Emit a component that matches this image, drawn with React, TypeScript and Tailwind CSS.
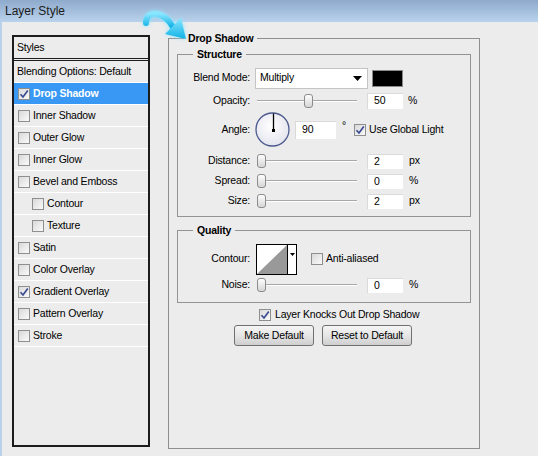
import React from 'react';

const styleRows = [
  { label: 'Drop Shadow', checked: true, active: true },
  { label: 'Inner Shadow' },
  { label: 'Outer Glow' },
  { label: 'Inner Glow' },
  { label: 'Bevel and Emboss' },
  { label: 'Contour', indent: true },
  { label: 'Texture', indent: true },
  { label: 'Satin' },
  { label: 'Color Overlay' },
  { label: 'Gradient Overlay', checked: true },
  { label: 'Pattern Overlay' },
  { label: 'Stroke' },
];

const Check = ({ checked = false }: { checked?: boolean }) => (
  <span className="w-[12px] h-[12px] shrink-0 border border-[#8e8f8f] bg-linear-to-br from-[#d9d9d9] to-[#fafafa] flex items-center justify-center">
    {checked && (
      <svg width="10" height="10" viewBox="0 0 10 10">
        <path d="M1.5 5.2 L4 8 L8.8 1.5" fill="none" stroke="#3b4b92" strokeWidth="1.7" />
      </svg>
    )}
  </span>
);

const Slider = ({ pos }: { pos: number }) => (
  <div className="relative w-[100px] h-[16px] ml-[7px]">
    <div className="absolute left-0 right-0 top-[7px] h-[2px] border-t border-[#a7a7a7] border-b border-b-white" />
    <div
      className="absolute top-[1px] w-[9px] h-[14px] rounded-[3px] border border-[#8c8c8c] bg-linear-to-b from-white to-[#d5d5d5]"
      style={{ left: pos }}
    />
  </div>
);

const NumBox = ({ value, w = 36 }: { value: string; w?: number }) => (
  <div
    className="h-full bg-white border-t border-l border-[#dadada] pl-[6px] flex items-center"
    style={{ width: w }}
  >
    {value}
  </div>
);

const Label = ({ children }: { children: React.ReactNode }) => (
  <div className="w-[72px] text-right shrink-0">{children}</div>
);

const Row = ({ label, slider, value, unit }: { label: string; slider: number; value: string; unit: string }) => (
  <div className="flex items-center h-[16px]">
    <Label>{label}</Label>
    <Slider pos={slider} />
    <div className="ml-[10px] h-[15px]">
      <NumBox value={value} />
    </div>
    <span className="ml-[6px]">{unit}</span>
  </div>
);

export default function App() {
  return (
    <div className="relative w-[538px] h-[456px] bg-[#ececec] overflow-hidden text-[10.5px] tracking-[-0.2px] text-black font-['Tahoma','Liberation_Sans',sans-serif]">
      <div className="h-[22px] bg-linear-to-b from-[#8eaacc] to-[#bad2ec] pl-[5px] flex items-center text-[12px] tracking-normal text-[#1b1b1b] font-['Segoe_UI','Liberation_Sans',sans-serif]">
        Layer Style
      </div>

      <div className="flex h-[434px] border-l-2 border-[#b9d1ea]">
        {/* Styles list */}
        <div className="ml-[10px] mt-[13px] w-[138px] h-[412px] border-2 border-[#1c1c1c] flex flex-col">
          <div className="h-[24px] border-b-[3px] border-double border-[#1c1c1c] pl-[3px] flex items-center">Styles</div>
          <div className="h-[22px] border-b border-white pl-[3px] flex items-center">Blending Options: Default</div>
          {styleRows.map(r => (
            <div
              key={r.label}
              className={`h-[22px] border-b border-white flex items-center gap-[3px] ${r.indent ? 'pl-[18px]' : 'pl-[4px]'} ${r.active ? 'bg-[#3898f4] text-white font-bold' : ''}`}
            >
              <Check checked={r.checked} />
              <span>{r.label}</span>
            </div>
          ))}
        </div>

        {/* Drop Shadow panel */}
        <fieldset className="ml-[18px] mt-[9px] w-[312px] h-[418px] border border-[#8f8f8f]">
          <legend className="ml-[15px] px-[4px] font-bold leading-[14px]">Drop Shadow</legend>

          <fieldset className="ml-[8px] mt-[2px] w-[294px] border border-[#939393] pb-[7px]">
            <legend className="ml-[15px] px-[4px] font-bold leading-[14px]">Structure</legend>

            <div className="mt-[6px] flex items-center h-[22px]">
              <Label>Blend Mode:</Label>
              <div className="ml-[5px] w-[113px] h-[21px] bg-white border border-[#c4c4c4] pl-[4px] pr-[5px] flex items-center justify-between">
                <span>Multiply</span>
                <svg width="9" height="5" viewBox="0 0 9 5">
                  <path d="M0 0 H9 L4.5 5 Z" fill="#000" />
                </svg>
              </div>
              <div className="ml-[4px] w-[31px] h-[17px] bg-black border border-[#8a8a8a]" />
            </div>

            <div className="mt-[3px] flex items-center h-[17px]">
              <Label>Opacity:</Label>
              <Slider pos={47} />
              <div className="ml-[10px] h-[16px]">
                <NumBox value="50" />
              </div>
              <span className="ml-[5px]">%</span>
            </div>

            <div className="mt-[3px] flex items-center h-[35px]">
              <Label>Angle:</Label>
              <svg className="ml-[5px]" width="35" height="35" viewBox="0 0 35 35">
                <defs>
                  <radialGradient id="dial" cx="0.45" cy="0.4" r="0.6">
                    <stop offset="0" stopColor="#ffffff" />
                    <stop offset="1" stopColor="#e4e5ee" />
                  </radialGradient>
                </defs>
                <circle cx="17.5" cy="17.5" r="16.5" fill="url(#dial)" stroke="#4d5a8e" strokeWidth="1.3" />
                <line x1="18.5" y1="1.5" x2="18.5" y2="18.5" stroke="#000" strokeWidth="1.3" />
                <rect x="17" y="17" width="3" height="3" fill="#000" />
              </svg>
              <div className="ml-[5px] h-[18px]">
                <NumBox value="90" w={41} />
              </div>
              <span className="ml-[6px] -mt-[8px]">°</span>
              <span className="ml-[8px] flex items-center gap-[3px]">
                <Check checked />
                <span>Use Global Light</span>
              </span>
            </div>

            <div className="mt-[6px]">
              <Row label="Distance:" slider={0} value="2" unit="px" />
            </div>
            <div className="mt-[4px]">
              <Row label="Spread:" slider={0} value="0" unit="%" />
            </div>
            <div className="mt-[4px]">
              <Row label="Size:" slider={0} value="2" unit="px" />
            </div>
          </fieldset>

          <fieldset className="ml-[8px] mt-[6px] w-[294px] border border-[#939393] pb-[9px]">
            <legend className="ml-[15px] px-[4px] font-bold leading-[14px]">Quality</legend>

            <div className="mt-[7px] flex items-center h-[30px]">
              <Label>Contour:</Label>
              <svg className="ml-[6px]" width="41" height="31" viewBox="0 0 41 31">
                <rect x="0.5" y="0.5" width="40" height="30" fill="#fff" stroke="#000" />
                <path d="M1 30 L31 1 V30 Z" fill="#999999" />
                <line x1="31.5" y1="1" x2="31.5" y2="30" stroke="#000" />
                <path d="M34 9 H39 L36.5 12 Z" fill="#000" />
              </svg>
              <span className="ml-[14px] flex items-center gap-[3px]">
                <Check />
                <span>Anti-aliased</span>
              </span>
            </div>

            <div className="mt-[3px]">
              <Row label="Noise:" slider={0} value="0" unit="%" />
            </div>
          </fieldset>

          <div className="mt-[5px] ml-[90px] flex items-center gap-[4px] h-[14px]">
            <Check checked />
            <span>Layer Knocks Out Drop Shadow</span>
          </div>

          <div className="mt-[3px] ml-[65px] flex gap-[8px]">
            <button className="w-[80px] h-[21px] rounded-[3px] border border-[#707070] bg-linear-to-b from-[#f5f5f5] via-[#e6e6e6] to-[#cfcfcf]">
              Make Default
            </button>
            <button className="w-[90px] h-[21px] rounded-[3px] border border-[#707070] bg-linear-to-b from-[#f5f5f5] via-[#e6e6e6] to-[#cfcfcf]">
              Reset to Default
            </button>
          </div>
        </fieldset>
      </div>

      {/* callout arrow */}
      <svg className="absolute left-[135px] top-[4px] drop-shadow-[0_0_2px_#8fe6ff]" width="56" height="42" viewBox="0 0 56 42">
        <defs>
          <linearGradient id="arw" x1="0" y1="0" x2="0" y2="1">
            <stop offset="0" stopColor="#8ae6ff" />
            <stop offset="1" stopColor="#10b2e6" />
          </linearGradient>
        </defs>
        <path d="M11 19 C11 6 28 6 38 23" fill="none" stroke="url(#arw)" strokeWidth="6" strokeLinecap="round" />
        <path d="M51 35 L30 30 L46 14 Z" fill="url(#arw)" />
      </svg>
    </div>
  );
}
